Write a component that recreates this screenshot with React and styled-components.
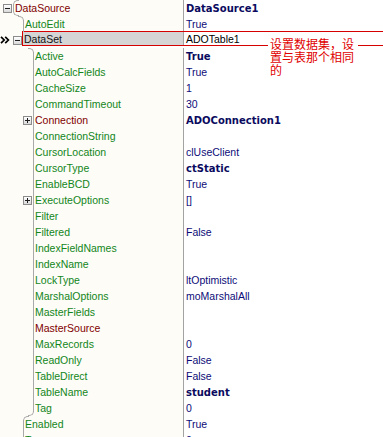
import React from "react";
import styled, { createGlobalStyle, css } from "styled-components";

const GlobalStyle = createGlobalStyle`
  html, body {
    margin: 0;
    padding: 0;
    background: #ffffff;
    overflow: hidden;
  }
  body {
    font-family: "Liberation Sans", Arial, sans-serif;
  }
`;

// level, name, value; top/bottom = direction the tree line bends at that end
const rows = [
  { level: 0, name: "DataSource", value: "DataSource1", bold: true, link: true, toggle: "open", top: "right", bottom: "right" },
  { level: 1, name: "AutoEdit", value: "True", top: "left" },
  { level: 1, name: "DataSet", value: "ADOTable1", link: true, toggle: "open", selected: true },
  { level: 2, name: "Active", value: "True", bold: true, top: "left" },
  { level: 2, name: "AutoCalcFields", value: "True" },
  { level: 2, name: "CacheSize", value: "1" },
  { level: 2, name: "CommandTimeout", value: "30" },
  { level: 2, name: "Connection", value: "ADOConnection1", bold: true, link: true, toggle: "closed" },
  { level: 2, name: "ConnectionString", value: "" },
  { level: 2, name: "CursorLocation", value: "clUseClient" },
  { level: 2, name: "CursorType", value: "ctStatic", bold: true },
  { level: 2, name: "EnableBCD", value: "True" },
  { level: 2, name: "ExecuteOptions", value: "[]", toggle: "closed" },
  { level: 2, name: "Filter", value: "" },
  { level: 2, name: "Filtered", value: "False" },
  { level: 2, name: "IndexFieldNames", value: "" },
  { level: 2, name: "IndexName", value: "" },
  { level: 2, name: "LockType", value: "ltOptimistic" },
  { level: 2, name: "MarshalOptions", value: "moMarshalAll" },
  { level: 2, name: "MasterFields", value: "" },
  { level: 2, name: "MasterSource", value: "", link: true },
  { level: 2, name: "MaxRecords", value: "0" },
  { level: 2, name: "ReadOnly", value: "False" },
  { level: 2, name: "TableDirect", value: "False" },
  { level: 2, name: "TableName", value: "student", bold: true },
  { level: 2, name: "Tag", value: "0", bottom: "left" },
  { level: 1, name: "Enabled", value: "True", top: "right" },
  { level: 1, name: "Tag", value: "0" },
];

const Marker = () => (
  <MarkerIcon width="10" height="8" viewBox="0 0 10 8">
    <path d="M1 0.8 L4.2 4 L1 7.2 M5.2 0.8 L8.4 4 L5.2 7.2" fill="none" stroke="#000" strokeWidth="1.7" />
  </MarkerIcon>
);

const PropRow = ({ row }) => {
  const { level, name, value, bold, link, toggle, selected, top, bottom } = row;
  return (
    <Row>
      <Lead $level={level}>
        {selected && <Marker />}
        {toggle && <Toggle $open={toggle === "open"} />}
      </Lead>
      <Body $selected={selected}>
        <Name $level={level} $selected={selected}>
          {!selected && (
            <Guide $top={top} $bottom={bottom}>
              {top && <Cap $at="top" $dir={top} />}
              {bottom && <Cap $at="bottom" $dir={bottom} />}
            </Guide>
          )}
          <Label $link={link} $selected={selected}>
            {name}
          </Label>
        </Name>
        <Value $bold={bold} $selected={selected}>
          {value}
        </Value>
      </Body>
    </Row>
  );
};

const App = () => {
  return (
    <>
      <GlobalStyle />
      <Inspector>
        {rows.map((row, i) => (
          <PropRow key={i} row={row} />
        ))}
        <Note>设置数据集，设置与表那个相同的</Note>
      </Inspector>
    </>
  );
};

export default App;

const Inspector = styled.div`
  position: relative;
  width: 383px;
  height: 437px;
  overflow: hidden;
  background: #ffffff;
`;

const Row = styled.div`
  display: flex;
  height: 16px;
`;

const Lead = styled.div`
  flex: none;
  box-sizing: border-box;
  width: ${(p) => 13 + p.$level * 10}px;
  display: flex;
  align-items: center;
  justify-content: flex-end;
  padding-right: 1px;
  background: #fdfcf7;
`;

const MarkerIcon = styled.svg`
  display: block;
  margin-right: auto;
`;

const Toggle = styled.span`
  position: relative;
  flex: none;
  box-sizing: border-box;
  width: 9px;
  height: 9px;
  border: 1px solid #8c8c8c;
  background: linear-gradient(#ffffff, #d9d9d9);

  &::before {
    content: "";
    position: absolute;
    left: 1px;
    top: 3px;
    width: 5px;
    height: 1px;
    background: #1e1e1e;
  }

  &::after {
    content: "";
    display: ${(p) => (p.$open ? "none" : "block")};
    position: absolute;
    left: 3px;
    top: 1px;
    width: 1px;
    height: 5px;
    background: #1e1e1e;
  }
`;

const Body = styled.div`
  flex: 1;
  display: flex;
  min-width: 0;
  ${(p) =>
    p.$selected &&
    css`
      box-sizing: border-box;
      height: 15px;
      margin: -1px 0 0 -1px;
      border: 1px solid #d60000;
      border-right: none;
    `}
`;

const Name = styled.div`
  flex: none;
  box-sizing: border-box;
  width: ${(p) => 171 - p.$level * 10}px;
  display: flex;
  align-items: center;
  border-right: 1px solid #a3a3a3;
  background: ${(p) => (p.$selected ? "#d5d5d5" : "#fdfcf7")};
`;

const Guide = styled.span`
  position: relative;
  flex: none;
  width: 1px;
  align-self: stretch;

  &::before {
    content: "";
    position: absolute;
    left: 0;
    width: 1px;
    top: ${(p) => (p.$top ? "4px" : "0")};
    bottom: ${(p) => (p.$bottom ? "4px" : "0")};
    background: #a9a9a9;
  }
`;

const Cap = styled.span`
  position: absolute;
  box-sizing: border-box;
  width: 6px;
  height: 5px;
  border: 0 solid #a9a9a9;
  ${(p) => (p.$at === "top" ? "top: 0;" : "bottom: 0;")}
  ${(p) => (p.$dir === "left" ? "right: 0;" : "left: 0;")}
  border-${(p) => p.$at}-width: 1px;
  border-${(p) => (p.$dir === "left" ? "right" : "left")}-width: 1px;
  border-${(p) => p.$at}-${(p) => (p.$dir === "left" ? "right" : "left")}-radius: 5px;
`;

const Label = styled.span`
  padding-left: 1px;
  font-size: 10.5px;
  white-space: nowrap;
  color: ${(p) => (p.$selected ? "#111111" : p.$link ? "#800000" : "#12861a")};
`;

const Value = styled.div`
  flex: 1;
  display: flex;
  align-items: center;
  padding-left: 2px;
  background: #ffffff;
  white-space: nowrap;
  font-size: 10.5px;
  color: ${(p) => (p.$selected ? "#000000" : "#0c0c78")};
  ${(p) =>
    p.$bold &&
    css`
      font-family: "DejaVu Sans", sans-serif;
      font-weight: bold;
      font-size: 10px;
      color: #0a0a5e;
    `}
`;

const Note = styled.div`
  position: absolute;
  left: 268px;
  top: 37px;
  box-sizing: border-box;
  width: 90px;
  padding: 0 2px;
  background: #ffffff;
  color: #e00000;
  font-family: "Noto Sans CJK SC", sans-serif;
  font-size: 12px;
  line-height: 13px;
`;
